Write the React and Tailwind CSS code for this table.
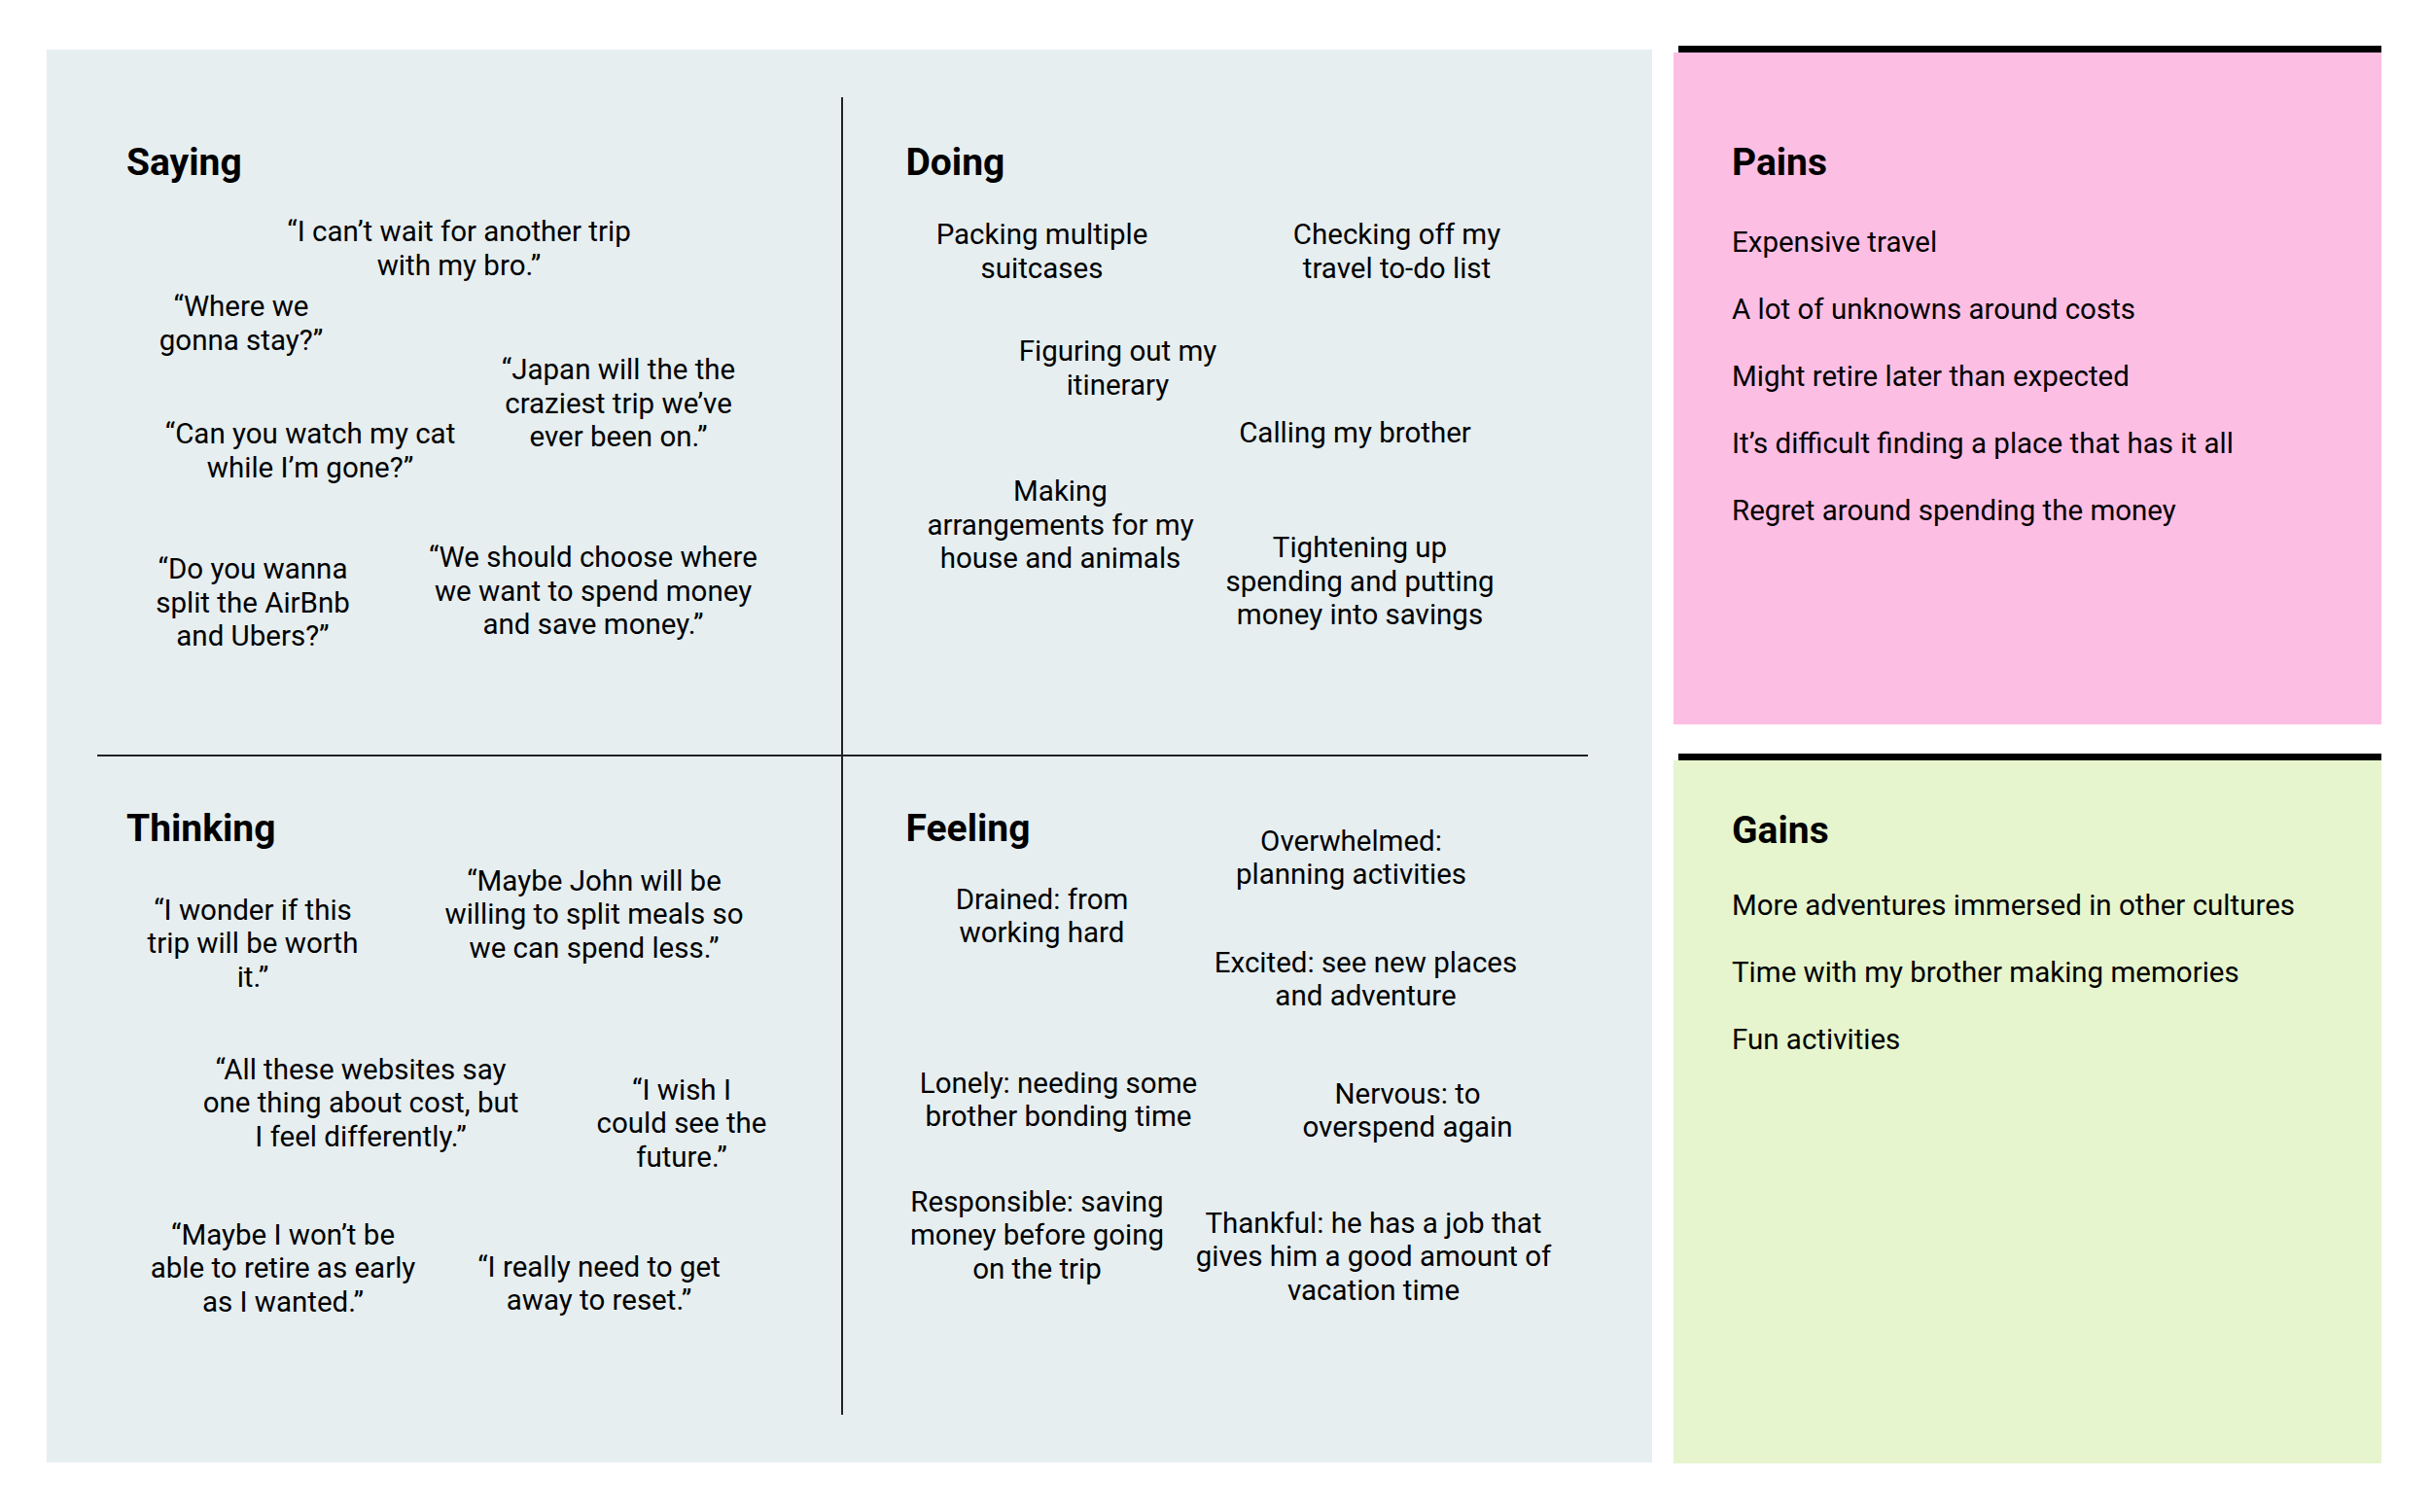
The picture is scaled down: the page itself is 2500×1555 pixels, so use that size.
import React from 'react';

const saying = [
  { text: ['“I can’t wait for another trip', 'with my bro.”'], pos: 'left-[372px] top-[121px]' },
  { text: ['“Where we', 'gonna stay?”'], pos: 'left-[148px] top-[198px]' },
  { text: ['“Japan will the the', 'craziest trip we’ve', 'ever been on.”'], pos: 'left-[536px] top-[263px]' },
  { text: ['“Can you watch my cat', 'while I’m gone?”'], pos: 'left-[219px] top-[329px]' },
  { text: ['“Do you wanna', 'split the AirBnb', 'and Ubers?”'], pos: 'left-[160px] top-[468px]' },
  { text: ['“We should choose where', 'we want to spend money', 'and save money.”'], pos: 'left-[510px] top-[456px]' },
];

const doing = [
  { text: ['Packing multiple', 'suitcases'], pos: 'left-[205px] top-[124px]' },
  { text: ['Checking off my', 'travel to-do list'], pos: 'left-[570px] top-[124px]' },
  { text: ['Figuring out my', 'itinerary'], pos: 'left-[283px] top-[244px]' },
  { text: ['Calling my brother'], pos: 'left-[527px] top-[328px]' },
  { text: ['Making', 'arrangements for my', 'house and animals'], pos: 'left-[224px] top-[388px]' },
  { text: ['Tightening up', 'spending and putting', 'money into savings'], pos: 'left-[532px] top-[446px]' },
];

const thinking = [
  { text: ['“I wonder if this', 'trip will be worth', 'it.”'], pos: 'left-[160px] top-[141px]' },
  { text: ['“Maybe John will be', 'willing to split meals so', 'we can spend less.”'], pos: 'left-[511px] top-[111px]' },
  { text: ['“All these websites say', 'one thing about cost, but', 'I feel differently.”'], pos: 'left-[271px] top-[305px]' },
  { text: ['“I wish I', 'could see the', 'future.”'], pos: 'left-[601px] top-[326px]' },
  { text: ['“Maybe I won’t be', 'able to retire as early', 'as I wanted.”'], pos: 'left-[191px] top-[475px]' },
  { text: ['“I really need to get', 'away to reset.”'], pos: 'left-[516px] top-[508px]' },
];

const feeling = [
  { text: ['Drained: from', 'working hard'], pos: 'left-[205px] top-[130px]' },
  { text: ['Overwhelmed:', 'planning activities'], pos: 'left-[523px] top-[70px]' },
  { text: ['Excited: see new places', 'and adventure'], pos: 'left-[538px] top-[195px]' },
  { text: ['Lonely: needing some', 'brother bonding time'], pos: 'left-[222px] top-[319px]' },
  { text: ['Nervous: to', 'overspend again'], pos: 'left-[581px] top-[330px]' },
  { text: ['Responsible: saving', 'money before going', 'on the trip'], pos: 'left-[200px] top-[441px]' },
  { text: ['Thankful: he has a job that', 'gives him a good amount of', 'vacation time'], pos: 'left-[546px] top-[463px]' },
];

const pains = [
  'Expensive travel',
  'A lot of unknowns around costs',
  'Might retire later than expected',
  'It’s difficult finding a place that has it all',
  'Regret around spending the money',
];

const gains = [
  'More adventures immersed in other cultures',
  'Time with my brother making memories',
  'Fun activities',
];

function Note({ text, pos }) {
  return (
    <p className={`absolute ${pos} -translate-x-1/2 whitespace-nowrap text-center text-[29.5px] leading-[34.5px]`}>
      {text.map((line, i) => (
        <span key={i} className="block">{line}</span>
      ))}
    </p>
  );
}

function Quadrant({ title, notes, className }) {
  return (
    <div className={`relative ${className}`}>
      <h2 className="text-[39px] leading-[46px] font-bold">{title}</h2>
      {notes.map((n, i) => (
        <Note key={i} {...n} />
      ))}
    </div>
  );
}

export default function App() {
  return (
    <div className="w-[2500px] h-[1555px] bg-white text-black flex pl-[48px] pt-[47px] gap-[22px]" style={{ fontFamily: 'Roboto, "Liberation Sans", sans-serif' }}>
      <div className="mt-[4px] w-[1651px] h-[1453px] bg-[#e6eef0] pt-[49px] pb-[49px] pl-[52px] pr-[66px]">
        <div className="grid grid-cols-2 grid-rows-2 h-full">
          <Quadrant title="Saying" notes={saying} className="border-r-2 border-b-2 border-[#222] pl-[30px] pt-[44px]" />
          <Quadrant title="Doing" notes={doing} className="border-b-2 border-[#222] pl-[65px] pt-[44px]" />
          <Quadrant title="Thinking" notes={thinking} className="border-r-2 border-[#222] pl-[30px] pt-[51px]" />
          <Quadrant title="Feeling" notes={feeling} className="pl-[65px] pt-[51px]" />
        </div>
      </div>

      <div className="w-[728px] flex flex-col gap-[30px]">
        <div className="h-[698px] flex flex-col">
          <div className="ml-[5px] h-[7px] bg-black" />
          <div className="flex-1 bg-[#fdbee4] pl-[60px] pt-[90px]">
            <h2 className="text-[39px] leading-[46px] font-bold">Pains</h2>
            <ul className="mt-[42px] flex flex-col gap-[34.5px]">
              {pains.map((p) => (
                <li key={p} className="text-[29.5px] leading-[34.5px]">{p}</li>
              ))}
            </ul>
          </div>
        </div>
        <div className="h-[730px] flex flex-col">
          <div className="ml-[5px] h-[7px] bg-black" />
          <div className="flex-1 bg-[#e6f5cd] pl-[60px] pt-[49px]">
            <h2 className="text-[39px] leading-[46px] font-bold">Gains</h2>
            <ul className="mt-[37px] flex flex-col gap-[34.5px]">
              {gains.map((g) => (
                <li key={g} className="text-[29.5px] leading-[34.5px]">{g}</li>
              ))}
            </ul>
          </div>
        </div>
      </div>
    </div>
  );
}
